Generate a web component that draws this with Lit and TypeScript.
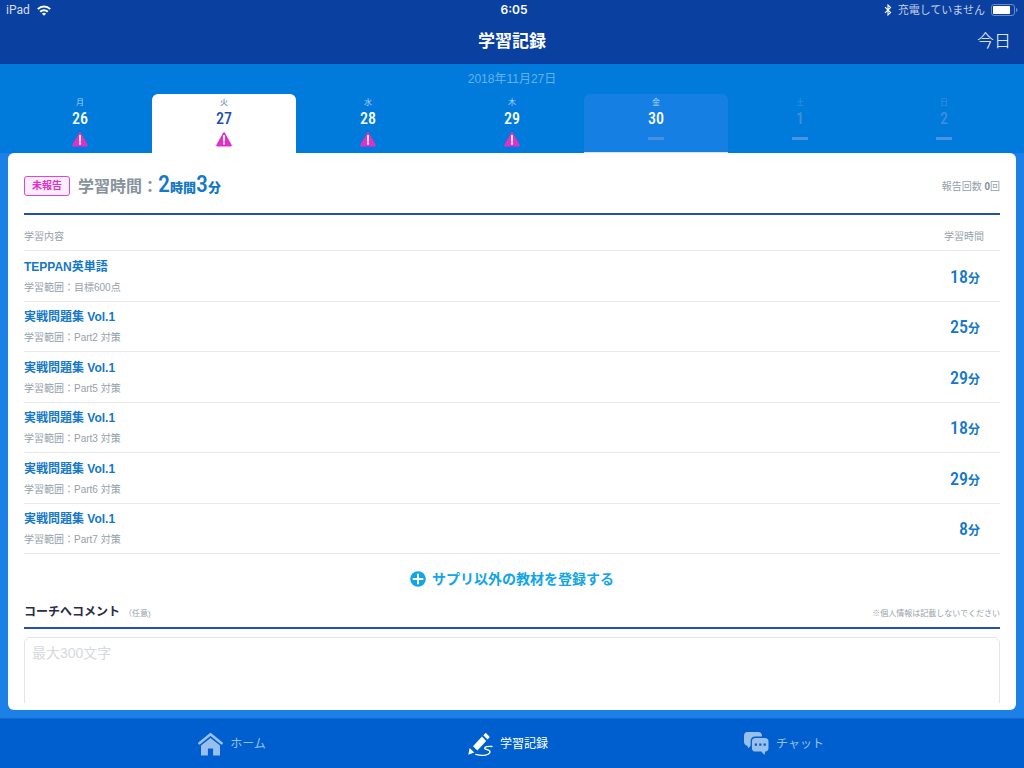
import { LitElement, html, css, svg } from "lit";
import { customElement, state } from "lit/decorators.js";
import { classMap } from "lit/directives/class-map.js";

interface Day {
  weekday: string;
  date: number;
  status: "alert" | "none";
  kind: "past" | "today" | "future";
}

interface Entry {
  title: string;
  range: string;
  minutes: number;
}

const DAYS: Day[] = [
  { weekday: "月", date: 26, status: "alert", kind: "past" },
  { weekday: "火", date: 27, status: "alert", kind: "past" },
  { weekday: "水", date: 28, status: "alert", kind: "past" },
  { weekday: "木", date: 29, status: "alert", kind: "past" },
  { weekday: "金", date: 30, status: "none", kind: "today" },
  { weekday: "土", date: 1, status: "none", kind: "future" },
  { weekday: "日", date: 2, status: "none", kind: "future" },
];

const ENTRIES: Entry[] = [
  { title: "TEPPAN英単語", range: "目標600点", minutes: 18 },
  { title: "実戦問題集 Vol.1", range: "Part2 対策", minutes: 25 },
  { title: "実戦問題集 Vol.1", range: "Part5 対策", minutes: 29 },
  { title: "実戦問題集 Vol.1", range: "Part3 対策", minutes: 18 },
  { title: "実戦問題集 Vol.1", range: "Part6 対策", minutes: 29 },
  { title: "実戦問題集 Vol.1", range: "Part7 対策", minutes: 8 },
];

const wifiIcon = html`<svg width="14" height="11" viewBox="0 0 14 11" fill="none" stroke="#fff" stroke-width="2" aria-hidden="true">
  <path d="M.8 4.1a8.8 8.8 0 0 1 12.4 0"/><path d="M3.2 6.7a5.4 5.4 0 0 1 7.6 0"/>
  <path d="M7 10.8 4.9 8.7a3 3 0 0 1 4.2 0z" fill="#fff" stroke="none"/></svg>`;

const bluetoothIcon = html`<svg width="8" height="12" viewBox="0 0 8 12" fill="none" stroke="#fff" stroke-width="1.1" aria-hidden="true">
  <path d="M1 3.2 6.6 8.6 4 11V1l2.6 2.4L1 8.8"/></svg>`;

const batteryIcon = html`<svg width="27" height="12" viewBox="0 0 27 12" aria-hidden="true">
  <rect x=".5" y=".5" width="23" height="11" rx="2.5" fill="none" stroke="#6c8ac6"/>
  <rect x="2" y="2" width="17" height="8" rx=".8" fill="#fff"/><path d="M25 4v4c1-.3 1.5-1 1.5-2S26 4.300 25 4z" fill="#6c8ac6"/></svg>`;

const alertIcon = html`<svg width="16" height="15" viewBox="0 0 16 15" aria-hidden="true">
  <path d="M8 1.200 14.800 13.400H1.200z" fill="#e030cc" stroke="#e030cc" stroke-width="2" stroke-linejoin="round"/>
  <path d="M7 3.200h2v6.300H7zM7 10.600h2v1.900H7z" fill="#fff"/></svg>`;

const plusIcon = html`<svg width="16" height="16" viewBox="0 0 16 16" aria-hidden="true">
  <circle cx="8" cy="8" r="7.800" fill="#12a5e8"/><path d="M8 3.500v9M3.500 8h9" stroke="#fff" stroke-width="2" stroke-linecap="round"/></svg>`;

const homeIcon = svg`<path d="M1.400 11.200 12.500 2.200 23.600 11.200" fill="none" stroke="currentColor" stroke-width="2.600" stroke-linecap="round" stroke-linejoin="round"/>
  <path d="M12.500 6 22 13.600V23.500h-6.900v-7h-5.200v7H3V13.600z" fill="currentColor"/>`;

const pencilIcon = svg`<path d="M15.300 3.200 17 1.400q.8-.7 1.500 0l2.800 3q.6.700-.1 1.400L19.500 7.600zM14 4.500 18.200 8.900 9.300 18.600 5 14.200zM1.600 16 6.300 20.500.300 22.700z" fill="currentColor"/>
  <path d="M24 14.500c-4-.6-7.600.4-7.200 2 .4 1.600 5.400.8 5.200 3.400-.3 2.800-6.500 4.800-14.200 2.400" fill="none" stroke="currentColor" stroke-width="1.300" stroke-linecap="round"/>`;

const chatIcon = svg`<path d="M3.500 0h10.800q3.500 0 3.700 3.800v.7H11.500Q6.600 4.500 6.600 9.200v4.500L4.300 16.300 3.300 13.700Q0 13 0 9.800V3.800Q0 0 3.500 0z" fill="currentColor"/>
  <path d="M11.600 6h9.200q3.700 0 3.700 3.700v6q0 3.600-3.300 3.800L20.600 23 17.300 19.600h-5.700q-3.700 0-3.700-3.700V9.700Q7.900 6 11.600 6z" fill="currentColor"/>
  <path d="M10.800 11.500h2.200v2.200h-2.200zM15.200 11.500h2.200v2.200h-2.200zM19.600 11.500h2.200v2.200h-2.200z" fill="#005fcf"/>`;

const TABS = [
  { id: "home", label: "ホーム", icon: homeIcon },
  { id: "record", label: "学習記録", icon: pencilIcon },
  { id: "chat", label: "チャット", icon: chatIcon },
];

@customElement("app-root")
export class AppRoot extends LitElement {
  @state() private selected = 27;
  @state() private tab = "record";

  static styles = css`
    :host {
      display: flex;
      flex-direction: column;
      height: 100vh;
      background: #1d80e6;
      color: #95a1aa;
      font-family: "Liberation Sans", "Noto Sans CJK JP", sans-serif;
      font-size: 10px;
      line-height: 16px;
    }
    * { box-sizing: border-box; }
    button { font: inherit; color: inherit; border: 0; background: none; padding: 0; cursor: pointer; }
    svg { display: block; flex: none; }

    .top { background: #0a41a1; color: #fff; }
    .status, .bar {
      display: grid;
      grid-template-columns: 1fr auto 1fr;
      align-items: center;
    }
    .status { height: 20px; padding: 0 6px; font-size: 12px; font-family: Inter, "Noto Sans CJK JP", sans-serif; }
    .left, .right { display: flex; align-items: center; gap: 7px; }
    .left { color: #d5dff1; font-family: Roboto, sans-serif; }
    .right { justify-content: flex-end; color: #c3cfe8; font-size: 11px; gap: 6px; }
    .clock { font-weight: 600; padding-left: 4px; }
    .bar { height: 44px; padding: 0 13px; }
    .bar h1 { grid-column: 2; margin: 0; font-size: 17px; line-height: 24px; font-weight: 700; }
    .bar button { justify-self: end; font-size: 17px; line-height: 24px; font-weight: 300; }

    .calendar { background: #007bdb; }
    .full-date { height: 30px; text-align: center; font-size: 12px; line-height: 30px; color: #66b1ea; }
    .days { display: grid; grid-template-columns: repeat(7, 1fr); padding: 0 8px; }
    .day {
      display: flex;
      flex-direction: column;
      align-items: center;
      height: 59px;
      border-radius: 6px 6px 0 0;
      color: #fff;
    }
    .weekday { padding-top: 3px; font-size: 8px; line-height: 12px; color: #a9d3f4; }
    .num { font-family: "Roboto Condensed", Roboto, sans-serif; font-weight: 500; }
    .date { font-size: 16px; line-height: 20px; }
    .mark { display: flex; align-items: center; justify-content: center; height: 20px; }
    .dash { width: 16px; height: 3px; margin-bottom: 2px; background: #4a94e5; }
    .today { background: #167fe4; border-bottom: 1px solid #cfe4fa; }
    .today .dash { background: #4790e4; }
    .future, .future .weekday { color: #3f8fe0; }
    .selected { background: #fff; color: #1f4fae; }
    .selected .weekday { color: #4a74c2; }

    main { flex: 1; min-height: 0; display: flex; padding: 0 8px 8px; }
    .card {
      flex: 1;
      min-width: 0;
      display: flex;
      padding: 0 16px 7px;
      background: #fff;
      border-radius: 6px;
    }
    .scroll { flex: 1; min-width: 0; overflow: hidden; }
    .summary {
      display: flex;
      align-items: center;
      gap: 8px;
      height: 62px;
      padding-top: 6px;
      border-bottom: 2px solid #2450a8;
    }
    .badge {
      padding: 0 7px;
      border: 1px solid #e544d0;
      border-radius: 3px;
      background: #fdeefb;
      color: #e030cc;
      font-weight: 700;
      line-height: 18px;
    }
    .total { flex: 1; margin: 0; font-size: 16px; line-height: 28px; font-weight: 700; color: #87939b; }
    .total strong { color: #1477c8; font-size: 13px; }
    .total .num { font-size: 24px; }
    .count { padding-top: 2px; }
    .count b { color: #7f8c95; }

    table { width: 100%; border-collapse: collapse; }
    th, td { padding: 0; border-bottom: 1px solid #e6e8ea; text-align: left; font-weight: 400; }
    thead th { height: 35px; padding-top: 10px; }
    thead th:last-child { padding-right: 16px; text-align: right; }
    tbody tr { height: 50px; }
    tbody tr:nth-child(odd) { height: 51px; }
    tbody th { padding-top: 2px; line-height: 16px; }
    .title { display: block; margin-bottom: 4px; font-size: 12px; line-height: 18px; font-weight: 700; color: #1477c8; }
    .range { display: block; line-height: 16px; }
    .minutes { padding: 4px 20px 0 0; text-align: right; font-size: 12px; line-height: 20px; font-weight: 700; color: #1477c8; }
    .minutes .num { font-size: 18px; }

    .add {
      display: flex;
      align-items: center;
      gap: 6px;
      margin: 0 auto;
      height: 50px;
      color: #12a5e8;
      font-size: 14px;
      line-height: 20px;
      font-weight: 700;
    }
    .comment-head {
      display: flex;
      align-items: baseline;
      gap: 4px;
      height: 25px;
      border-bottom: 2px solid #2450a8;
      font-size: 8px;
    }
    .comment-head label { font-size: 12px; font-weight: 700; color: #2b2b45; }
    .note { margin-left: auto; }
    textarea {
      display: block;
      width: 100%;
      height: 120px;
      margin-top: 8px;
      padding: 5px 7px;
      border: 1px solid #e2e4e7;
      border-radius: 6px;
      resize: none;
      outline: none;
      font: 14px/20px "Liberation Sans", "Noto Sans CJK JP", sans-serif;
      color: #333;
    }
    textarea::placeholder { color: #d6dae0; opacity: 1; }

    .tabs {
      display: flex;
      justify-content: center;
      padding-right: 8px;
      background: #005fcf;
      border-top: 1px solid #1669cc;
    }
    .tab {
      flex: 0 1 276px;
      display: flex;
      align-items: center;
      justify-content: center;
      gap: 7px;
      height: 49px;
      padding-top: 1px;
      font-size: 12px;
      color: #99bfec;
    }
    .tab.active { color: #fff; }
  `;

  private renderDay(d: Day) {
    const on = d.date === this.selected;
    return html`<button
      class=${classMap({ day: true, selected: on, today: d.kind === "today" && !on, future: d.kind === "future" && !on })}
      aria-pressed=${on ? "true" : "false"}
      @click=${() => (this.selected = d.date)}>
      <span class="weekday">${d.weekday}</span>
      <span class="num date">${d.date}</span>
      <span class="mark">${d.status === "alert" ? alertIcon : html`<span class="dash"></span>`}</span>
    </button>`;
  }

  render() {
    return html`
      <header class="top">
        <div class="status">
          <span class="left">iPad ${wifiIcon}</span>
          <span class="clock">6:05</span>
          <span class="right">${bluetoothIcon}<span>充電していません</span>${batteryIcon}</span>
        </div>
        <div class="bar">
          <h1>学習記録</h1>
          <button @click=${() => (this.selected = 30)}>今日</button>
        </div>
      </header>
      <section class="calendar">
        <div class="full-date">2018年11月27日</div>
        <div class="days">${DAYS.map((d) => this.renderDay(d))}</div>
      </section>
      <main>
        <div class="card">
          <div class="scroll">
            <div class="summary">
              <span class="badge">未報告</span>
              <p class="total">学習時間：<strong><span class="num">2</span>時間<span class="num">3</span>分</strong></p>
              <span class="count">報告回数 <b>0</b>回</span>
            </div>
            <table>
              <thead>
                <tr><th scope="col">学習内容</th><th scope="col">学習時間</th></tr>
              </thead>
              <tbody>
                ${ENTRIES.map((e) => html`<tr>
                  <th scope="row"><span class="title">${e.title}</span><span class="range">学習範囲：${e.range}</span></th>
                  <td class="minutes"><span class="num">${e.minutes}</span>分</td>
                </tr>`)}
              </tbody>
            </table>
            <button class="add">${plusIcon}サプリ以外の教材を登録する</button>
            <div class="comment-head">
              <label for="comment">コーチへコメント</label>
              <span>（任意)</span>
              <span class="note">※個人情報は記載しないでください</span>
            </div>
            <textarea id="comment" maxlength="300" placeholder="最大300文字"></textarea>
          </div>
        </div>
      </main>
      <nav class="tabs">
        ${TABS.map((t) => html`<button class=${classMap({ tab: true, active: t.id === this.tab })} @click=${() => (this.tab = t.id)}>
          <svg width="25" height="25" viewBox="0 0 25 25" aria-hidden="true">${t.icon}</svg>${t.label}
        </button>`)}
      </nav>`;
  }
}
